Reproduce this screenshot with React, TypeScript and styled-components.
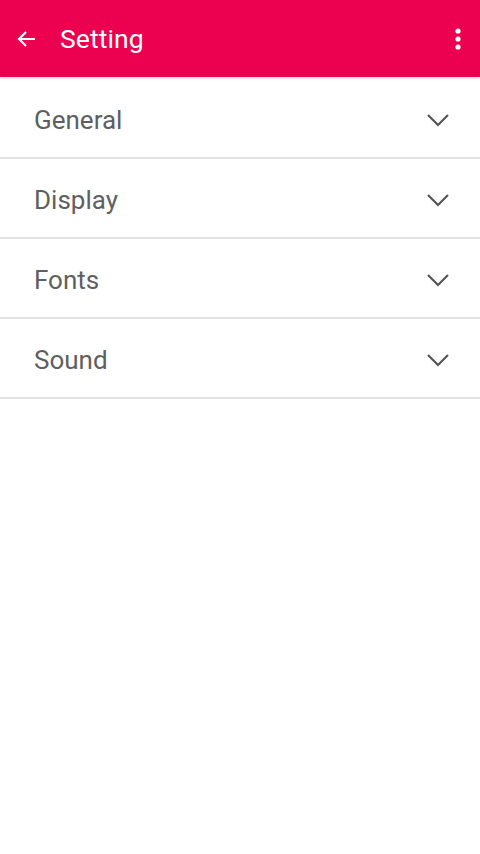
import React from 'react';
import styled, { createGlobalStyle } from 'styled-components';

const GlobalStyle = createGlobalStyle`
	html, body {
		margin: 0;
		padding: 0;
		background: #ffffff;
		font-family: Roboto, 'Liberation Sans', sans-serif;
	}
`;

const Page = styled.div`
	width: 480px;
	min-height: 854px;
	background: #ffffff;
`;

const Toolbar = styled.header`
	height: 77px;
	background: #ec0050;
	display: flex;
	align-items: center;
	padding: 0 7px 0 12px;
	box-shadow: 0 1px 3px rgba(0, 0, 0, 0.18);
	position: relative;
	z-index: 1;
`;

const IconButton = styled.button`
	border: 0;
	background: transparent;
	padding: 0;
	width: 30px;
	height: 40px;
	display: flex;
	align-items: center;
	justify-content: center;
	color: #ffffff;
`;

const Title = styled.h1`
	flex: 1;
	margin: 0 0 0 18px;
	font-size: 26.5px;
	font-weight: 400;
	color: #ffffff;
	letter-spacing: 0.1px;
`;

const List = styled.div`
	display: flex;
	flex-direction: column;
	padding-top: 2px;
`;

const Row = styled.div`
	height: 78px;
	border-bottom: 2px solid #e2e2e2;
	display: flex;
	align-items: center;
	justify-content: space-between;
	padding: 0 30px 0 34px;
`;

const Label = styled.span`
	font-size: 26px;
	color: #5f5f5f;
	margin-top: 4px;
`;

const ChevronIcon = styled.svg`
	margin-top: 4px;
`;

const Chevron = () => (
	<ChevronIcon width="24" height="14" viewBox="0 0 24 14">
		<path d="M2 2 L12 12 L22 2" fill="none" stroke="#555555" strokeWidth="2.2" />
	</ChevronIcon>
);

const sections = ['General', 'Display', 'Fonts', 'Sound'];

const App: React.FC = () => {
	return (
		<Page>
			<GlobalStyle />
			<Toolbar>
				<IconButton aria-label="Back">
					<svg width="24" height="24" viewBox="0 0 24 24">
						<path d="M20 12 H5 M11 5 L4 12 L11 19" fill="none" stroke="#ffffff" strokeWidth="2.2" />
					</svg>
				</IconButton>
				<Title>Setting</Title>
				<IconButton aria-label="More">
					<svg width="6" height="24" viewBox="0 0 6 24">
						<circle cx="3" cy="4" r="2.6" fill="#ffffff" />
						<circle cx="3" cy="12" r="2.6" fill="#ffffff" />
						<circle cx="3" cy="20" r="2.6" fill="#ffffff" />
					</svg>
				</IconButton>
			</Toolbar>
			<List>
				{sections.map((name) => (
					<Row key={name}>
						<Label>{name}</Label>
						<Chevron />
					</Row>
				))}
			</List>
		</Page>
	);
};

export default App;
